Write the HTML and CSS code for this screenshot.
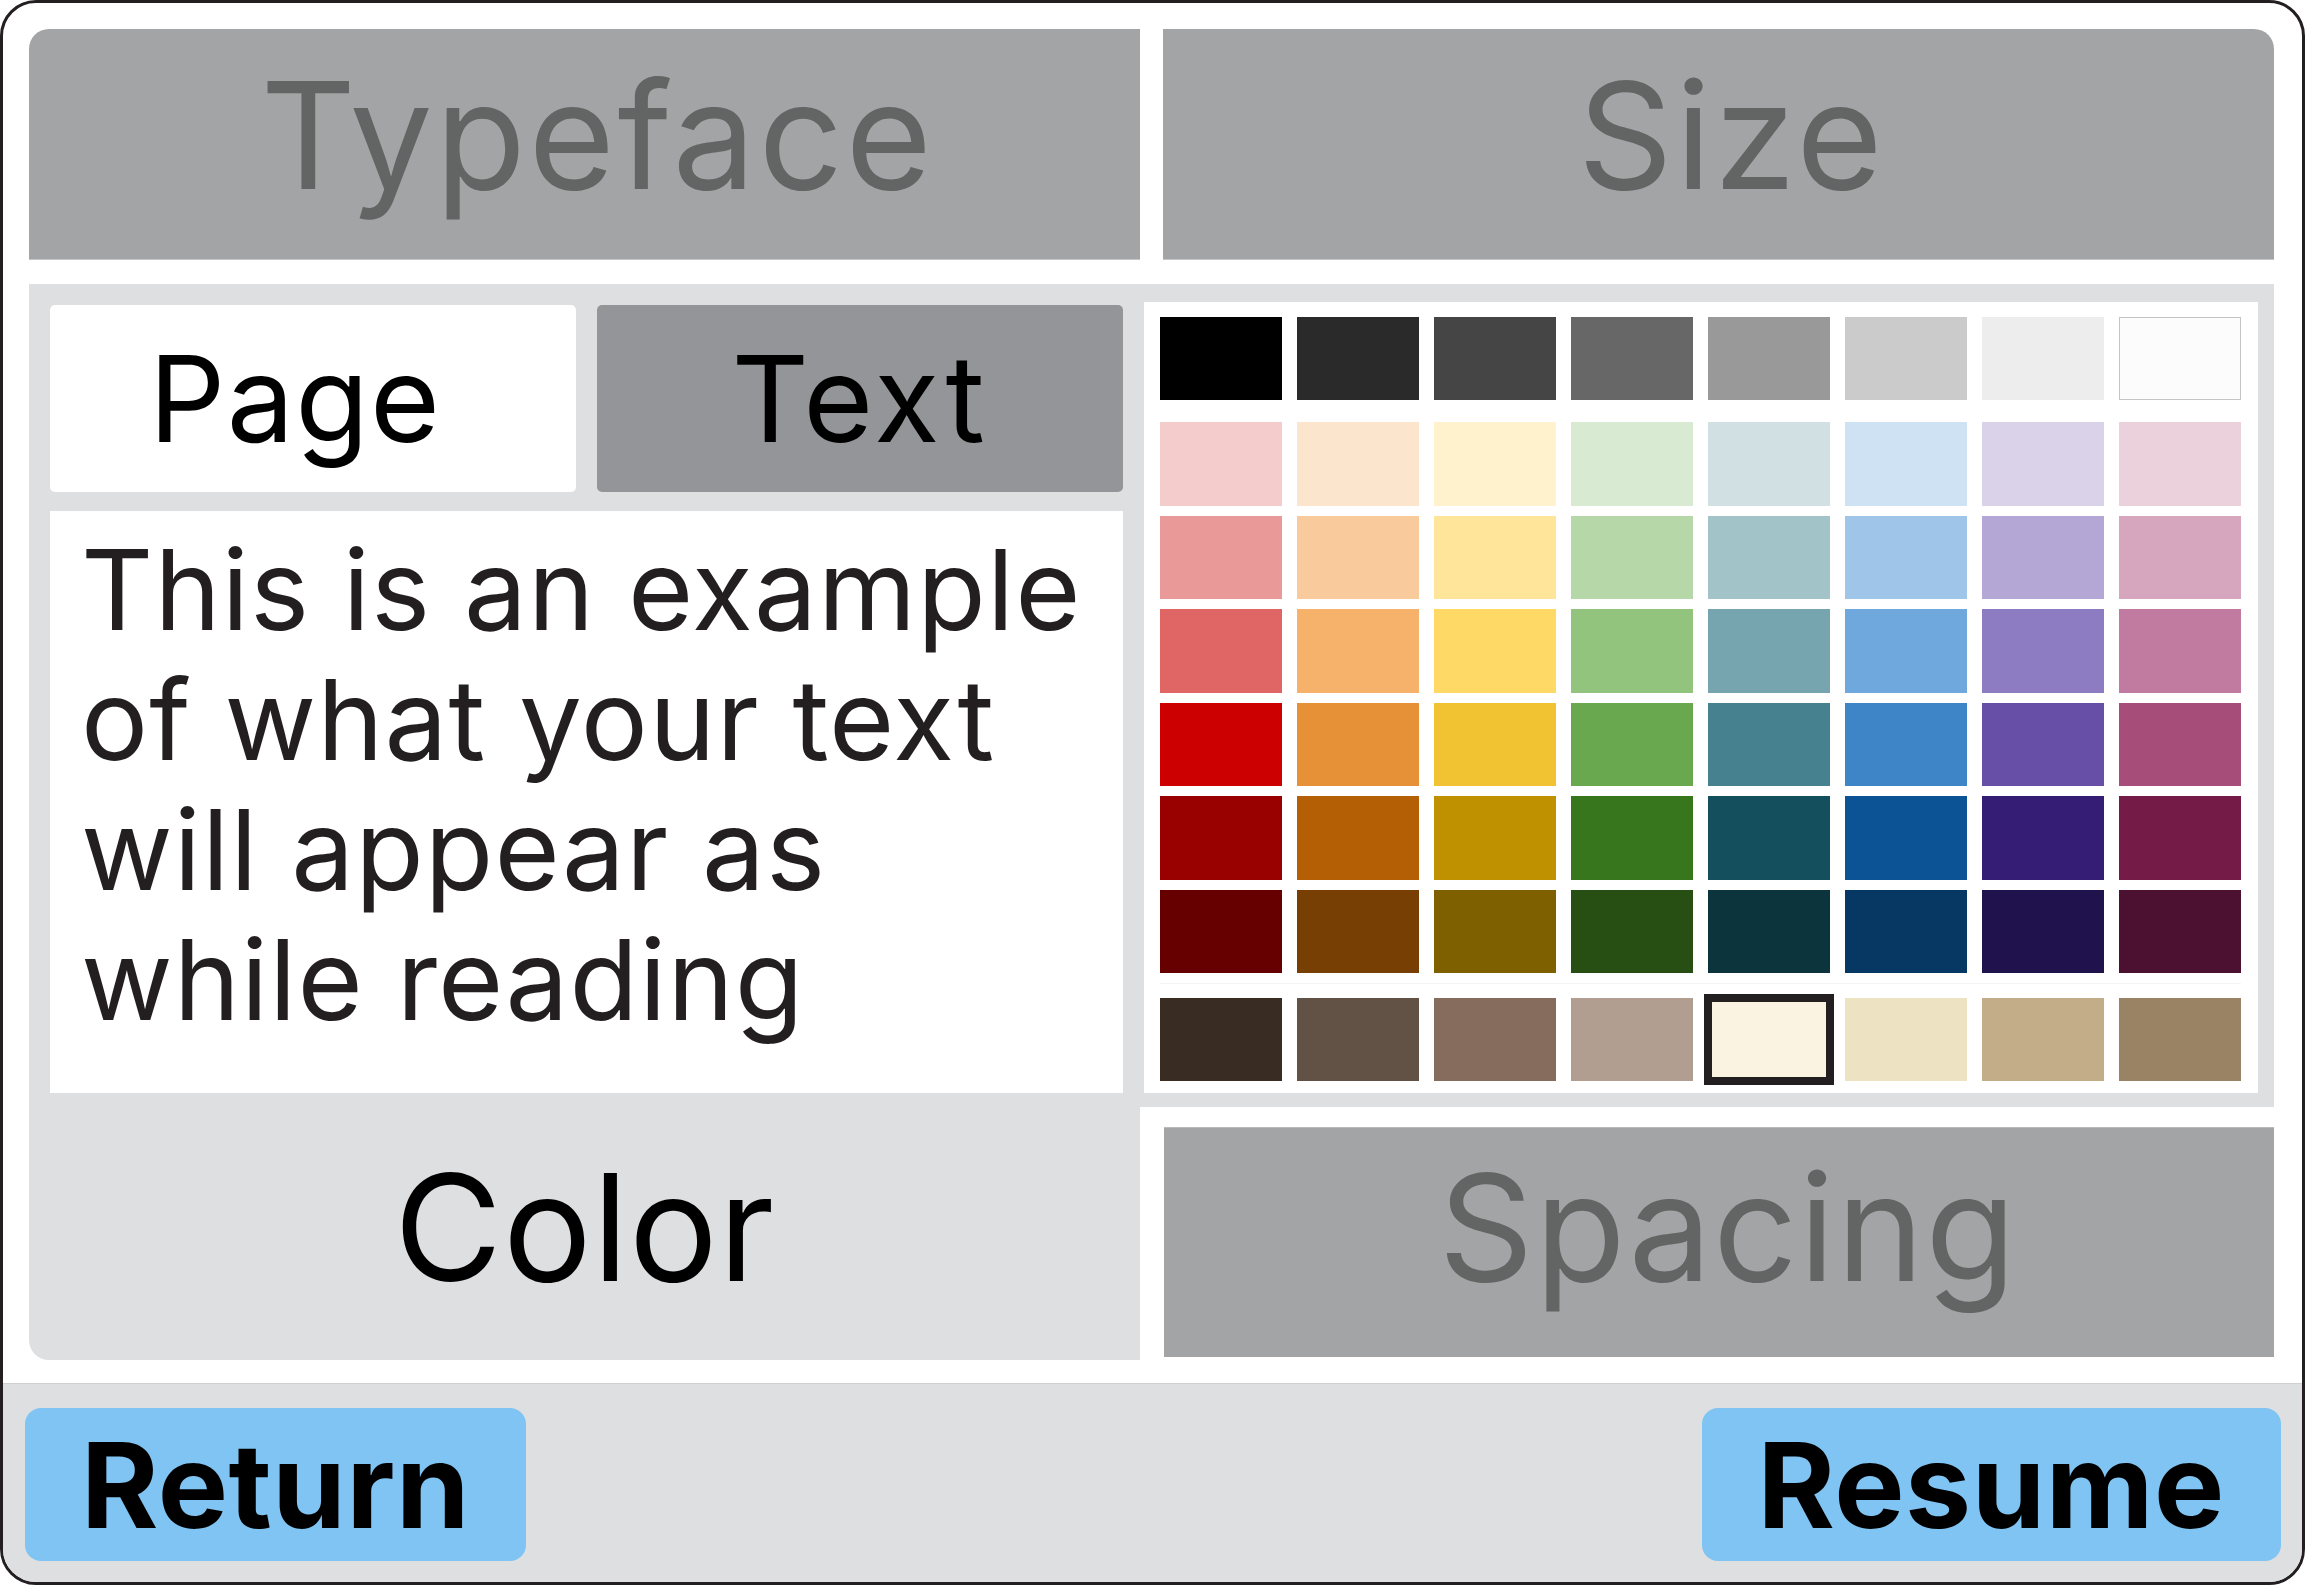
FILE: index.html
```html
<!DOCTYPE html>
<html lang="en">
<head>
    <meta charset="UTF-8">
    <meta name="viewport" content="width=device-width, initial-scale=1.0">
    <title>Reading Settings</title>
    <link rel="stylesheet" href="styles.css">
</head>
<body>

<div class="window">
    <div class="settings">
        <div class="tab tab-top tab-first">Typeface</div>
        <div class="tab tab-top tab-last">Size</div>

        <div class="panel">
            <div class="preview-col">
                <div class="toggle">
                    <div class="toggle-btn active">Page</div>
                    <div class="toggle-btn">Text</div>
                </div>
                <div class="preview">This is an example of what your text will appear as while reading</div>
            </div>

            <div class="palette">
                <div class="swatch-row greys" id="greys"></div>
                <div class="swatch-grid" id="colors"></div>
                <div class="swatch-row earth" id="earth"></div>
            </div>
        </div>

        <div class="tab tab-current">Color</div>
        <div class="tab-slot">
            <div class="tab tab-bottom">Spacing</div>
        </div>
    </div>

    <div class="footer">
        <button class="btn">Return</button>
        <button class="btn">Resume</button>
    </div>
</div>

<script>
    const greys = ["#000000", "#2a2a2a", "#454545", "#676767", "#999999", "#cbcbcb", "#ededed", "#fcfcfc"];

    const colors = [
        "#f4cccc", "#fce5cd", "#fff2cc", "#d9ead3", "#d0e0e3", "#cfe2f3", "#d9d2e9", "#ead1dc",
        "#ea9999", "#f9cb9c", "#ffe599", "#b6d7a8", "#a2c4c9", "#9fc5e8", "#b4a7d6", "#d5a6bd",
        "#e06666", "#f6b26b", "#ffd966", "#93c47d", "#76a5af", "#6fa8dc", "#8e7cc3", "#c27ba0",
        "#cc0000", "#e69138", "#f1c232", "#6aa84f", "#45818e", "#3d85c6", "#674ea7", "#a64d79",
        "#990000", "#b45f06", "#bf9000", "#38761d", "#134f5c", "#0b5394", "#351c75", "#741b47",
        "#660000", "#783f04", "#7f6000", "#274e13", "#0c343d", "#073763", "#20124d", "#4c1130"
    ];

    const earth = ["#382c23", "#625246", "#856c5d", "#b19e90", "#faf3e1", "#ede3c3", "#c3ad88", "#9a8364"];

    // fill a container with one swatch per colour
    function addSwatches(id, list, selected) {
        const box = document.getElementById(id);
        list.forEach(function (color) {
            const swatch = document.createElement("div");
            swatch.className = "swatch";
            if (color === "#fcfcfc") swatch.className += " light";
            if (color === selected) swatch.className += " selected";
            swatch.style.background = color;
            box.appendChild(swatch);
        });
    }

    addSwatches("greys", greys);
    addSwatches("colors", colors);
    addSwatches("earth", earth, "#faf3e1");
</script>

</body>
</html>
```

FILE: styles.css
```css
* {
    box-sizing: border-box;
}

body {
    margin: 0;
    font-family: 'Inter', 'Liberation Sans', sans-serif;
    background: #fff;
}

.window {
    width: 2305px;
    height: 1585px;
    border: 3px solid #231f20;
    border-radius: 36px;
    overflow: hidden;
    display: flex;
    flex-direction: column;
    background: #fff;
}

.settings {
    display: grid;
    grid-template-columns: 1fr 1fr;
    grid-template-rows: 231px auto 253px;
    column-gap: 23px;
    padding: 26px 28px 0 26px;
}

.tab {
    display: flex;
    justify-content: center;
    align-items: center;
    background-color: #a3a4a6;
    color: #636564;
    font-size: 148px;
    letter-spacing: 0.018em;
}

.tab-top {
    padding: 0 0 17px 26px;
    border-bottom: 1px solid #c4c5c7;
}

.tab-first {
    border-top-left-radius: 20px;
}

.tab-last {
    border-top-right-radius: 20px;
}

.tab-current {
    background-color: #dedfe1;
    color: #000;
    padding-bottom: 12px;
    letter-spacing: 0.005em;
    border-bottom-left-radius: 20px;
}

.tab-slot {
    display: flex;
    padding: 20px 0 3px 1px;
}

.tab-bottom {
    flex: 1;
    padding: 0 0 30px 18px;
    border-top: 1px solid #b9babc;
    letter-spacing: 0.01em;
}

.panel {
    grid-column: 1 / -1;
    margin-top: 24px;
    height: 823px;
    background-color: #dedfe1;
    padding: 18px 16px 14px 21px;
    display: grid;
    grid-template-columns: 1fr 1114px;
    column-gap: 21px;
}

.preview-col {
    display: flex;
    flex-direction: column;
    padding-top: 3px;
}

.toggle {
    display: grid;
    grid-template-columns: 1fr 1fr;
    column-gap: 21px;
    height: 187px;
    margin-bottom: 19px;
}

.toggle-btn {
    display: flex;
    justify-content: center;
    align-items: center;
    background-color: #949598;
    border-radius: 5px;
    font-size: 120px;
    letter-spacing: 0.03em;
    color: #000;
}

.toggle-btn.active {
    background-color: #fff;
    padding-right: 36px;
    letter-spacing: 0.01em;
}

.preview {
    flex: 1;
    background: #fff;
    padding: 13px 6px 0 31px;
    font-size: 112px;
    line-height: 130px;
    letter-spacing: 0.01em;
    color: #231f20;
}

.palette {
    background: #fff;
    padding: 15px 17px 12px 16px;
    display: flex;
    flex-direction: column;
}

.swatch-row,
.swatch-grid {
    display: grid;
    grid-template-columns: repeat(8, 122px);
    column-gap: 15px;
}

.swatch-row {
    grid-template-rows: 83px;
}

.greys {
    margin-bottom: 22px;
}

.swatch-grid {
    grid-auto-rows: 83.5px;
    row-gap: 10px;
}

.earth {
    margin-top: 10px;
    padding-top: 14px;
    border-top: 1px solid #f4f4f4;
}

.swatch.light {
    border: 1px solid #c4c4c4;
}

.swatch.selected {
    margin: -4px;
    border: 8px solid #231f20;
}

.footer {
    flex: 1;
    margin-top: 23px;
    background-color: #dedfe1;
    border-top: 1px solid #cfd0d2;
    display: flex;
    justify-content: space-between;
    padding: 24px 21px 21px 22px;
}

.btn {
    border: none;
    border-radius: 16px;
    background-color: #7fc4f2;
    color: #000;
    font-family: 'Inter', 'Liberation Sans', sans-serif;
    font-size: 118px;
    font-weight: bold;
    letter-spacing: 0.005em;
    padding: 0 56px;
    cursor: pointer;
}
```
